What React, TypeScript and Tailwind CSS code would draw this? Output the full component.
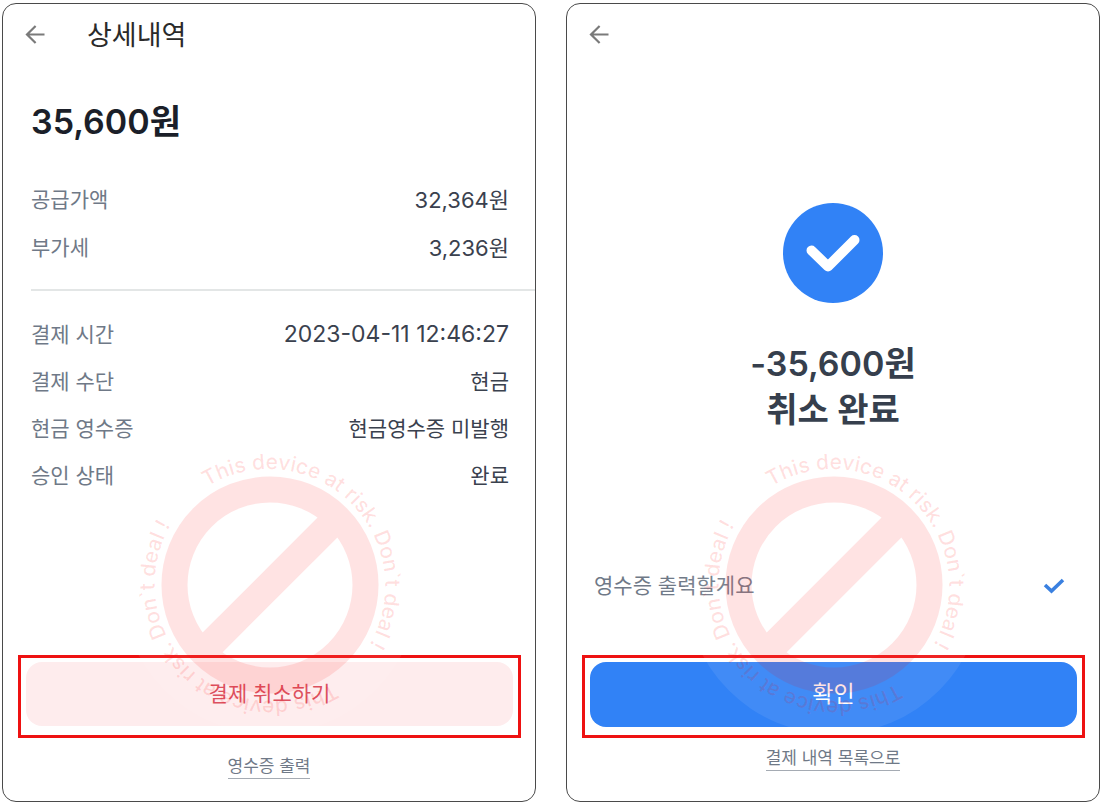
import { useId, useState } from 'react'

interface Row {
  label: string
  value: string
}

const amountRows: Row[] = [
  { label: '공급가액', value: '32,364원' },
  { label: '부가세', value: '3,236원' },
]

const paymentRows: Row[] = [
  { label: '결제 수단', value: '현금' },
  { label: '현금 영수증', value: '현금영수증 미발행' },
  { label: '승인 상태', value: '완료' },
]

function BackButton() {
  return (
    <button type="button" aria-label="뒤로" className="flex size-6 shrink-0 items-center justify-center text-[#7a7a7a]">
      <svg viewBox="0 0 24 24" className="size-6" fill="none" stroke="currentColor" strokeWidth="2.2">
        <path d="M21.5 11.5H4M12.6 3 4 11.5l8.6 8.5" />
      </svg>
    </button>
  )
}

function Watermark() {
  const id = useId()
  const text = 'This device at risk. Don`t deal !'

  return (
    <svg
      aria-hidden="true"
      viewBox="-150 -150 300 300"
      className="pointer-events-none absolute top-[431px] left-1/2 size-[300px] -translate-x-1/2"
    >
      <defs>
        <path id={id} d="M-62.9 -98.4A116.8 116.8 0 0 1 62.9 98.4A116.8 116.8 0 0 1 -62.9 -98.4" />
      </defs>
      <circle cx="1" r="149" fill="#fff" fillOpacity="0.08" />
      <g opacity="0.105">
        <circle cx="1" r="95.5" fill="none" stroke="#f00" strokeWidth="26" />
        <path d="M-65 66 67 -66" stroke="#f00" strokeWidth="28" />
      </g>
      <g
        fill="#f00"
        fillOpacity="0.12"
        transform="translate(1 0)"
        className="font-['Inter'] text-[21px] font-medium"
      >
        <text>
          <textPath href={`#${id}`}>{text}</textPath>
        </text>
        <text transform="rotate(180)">
          <textPath href={`#${id}`}>{text}</textPath>
        </text>
      </g>
    </svg>
  )
}

function DetailScreen() {
  return (
    <section className="relative flex flex-col overflow-hidden rounded-[14px] border border-[#4a4a4a] bg-white">
      <header className="flex h-[62px] items-center gap-10 pl-5">
        <BackButton />
        <h1 className="pt-[2px] text-[27px] text-[#2a2a2a]">상세내역</h1>
      </header>

      <h2 className="mt-8 pl-7 text-[34px] leading-[48px] font-semibold text-[#1b1f29]">35,600원</h2>

      <dl className="mt-[30px] pr-[26px] pl-7">
        {amountRows.map((row) => (
          <div key={row.label} className="flex h-12 items-center justify-between">
            <dt className="text-[21px] text-[#6f7987]">{row.label}</dt>
            <dd className="text-[22px] text-[#3a414e]">{row.value}</dd>
          </div>
        ))}
      </dl>
      <hr className="mt-[17px] ml-7 border-t-2 border-[#e3e6e6]" />
      <dl className="mt-5 pr-[26px] pl-7">
        <div className="flex h-[47px] items-center justify-between">
          <dt className="text-[21px] text-[#6f7987]">결제 시간</dt>
          <dd className="text-[23px] text-[#3a414e]">2023-04-11 12:46:27</dd>
        </div>
        {paymentRows.map((row) => (
          <div key={row.label} className="flex h-[47px] items-center justify-between text-[21px]">
            <dt className="text-[#6f7987]">{row.label}</dt>
            <dd className="text-[#3a414e]">{row.value}</dd>
          </div>
        ))}
      </dl>

      <div className="mt-[156px] mr-[14px] ml-[15px] border-[3px] border-[#ee1111] px-[5px] pt-1 pb-[9px]">
        <button type="button" className="h-16 w-full rounded-2xl bg-[#feeced] text-[21px] text-[#da4352]">
          결제 취소하기
        </button>
      </div>

      <div className="mt-4 mb-[22px] flex justify-center">
        <a href="#receipt" className="border-b border-[#a5abb3] text-[17px] leading-6 text-[#6f7987]">
          영수증 출력
        </a>
      </div>
      <Watermark />
    </section>
  )
}

function CompleteScreen() {
  const [printReceipt, setPrintReceipt] = useState(true)

  return (
    <section className="relative flex flex-col overflow-hidden rounded-[14px] border border-[#4a4a4a] bg-white">
      <header className="flex h-[62px] items-center pl-5">
        <BackButton />
      </header>

      <div className="mt-[137px] flex flex-col items-center">
        <svg viewBox="0 0 100 100" className="size-[100px]" fill="none" aria-hidden="true">
          <circle cx="50" cy="50" r="50" fill="#3182f6" />
          <path
            d="M28.5 47.5 45 63.5 71.5 37"
            stroke="#fff"
            strokeWidth="10"
            strokeLinecap="round"
            strokeLinejoin="round"
          />
        </svg>
        <h2 className="mt-[38px] text-center text-[34px] leading-[46px] font-semibold text-[#363f4d]">
          -35,600원
          <br />
          취소 완료
        </h2>
      </div>

      <label className="mt-[129px] mr-[34px] ml-[27px] flex h-12 items-center justify-between text-[21px] text-[#6f7987]">
        영수증 출력할게요
        <input
          type="checkbox"
          checked={printReceipt}
          onChange={(e) => setPrintReceipt(e.target.checked)}
          className="peer sr-only"
        />
        <svg viewBox="0 0 22 16" className="hidden h-4 w-[22px] peer-checked:block" fill="none" aria-hidden="true">
          <path d="M2 7 8.5 13 20 2" stroke="#3a80e0" strokeWidth="3.6" />
        </svg>
      </label>

      <div className="mt-[45px] mr-[14px] ml-[15px] border-[3px] border-[#ee1111] px-[5px] pt-1 pb-2">
        <button type="button" className="h-[65px] w-full rounded-2xl bg-[#3182f6] text-[23px] text-white">
          확인
        </button>
      </div>

      <div className="mt-2 flex justify-center">
        <a href="#history" className="border-b border-[#a5abb3] text-[17px] leading-6 text-[#6f7987]">
          결제 내역 목록으로
        </a>
      </div>
      <Watermark />
    </section>
  )
}

export default function App() {
  return (
    <main className="grid grid-cols-2 gap-[30px] bg-white pt-[3px] pr-1 pb-[2px] pl-[2px] font-['Inter','Noto_Sans_CJK_KR',sans-serif]">
      <DetailScreen />
      <CompleteScreen />
    </main>
  )
}
